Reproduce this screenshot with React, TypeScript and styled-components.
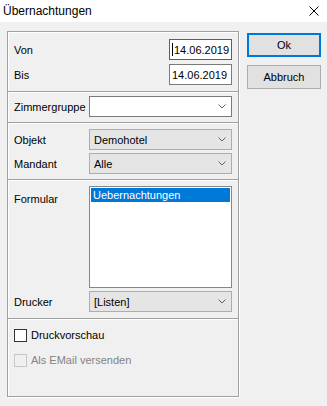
import React from 'react';
import styled, { createGlobalStyle } from 'styled-components';

const GlobalStyle = createGlobalStyle`
  html, body {
    margin: 0;
    padding: 0;
    background: #f0f0f0;
  }
  body {
    font-family: "Liberation Sans", Arial, sans-serif;
    font-size: 11px;
    color: #000;
  }
`;

const Window = styled.div`
  width: 327px;
  height: 406px;
  display: flex;
  flex-direction: column;
  background: #f0f0f0;
  overflow: hidden;
`;

const TitleBar = styled.div`
  height: 22px;
  flex: none;
  background: #fff;
  display: flex;
  align-items: center;
  justify-content: space-between;
  padding: 0 8px 0 3px;
  font-size: 12px;
`;

const Body = styled.div`
  display: flex;
  align-items: flex-start;
  padding: 9px 6px 0 7px;
`;

const Panel = styled.div`
  width: 233px;
  height: 366px;
  box-sizing: border-box;
  border: 1px solid #a0a0a0;
  box-shadow: inset 1px 1px 0 #fff, 1px 1px 0 #fff;
  display: flex;
  flex-direction: column;
`;

const Section = styled.div<{ $pad: string; $grow?: boolean }>`
  display: flex;
  flex-direction: column;
  padding: ${p => p.$pad};
  flex: ${p => (p.$grow ? 1 : 'none')};
`;

const Divider = styled.div`
  height: 0;
  border-top: 1px solid #a0a0a0;
  border-bottom: 1px solid #fff;
`;

const Row = styled.div<{ $gap?: number; $top?: boolean }>`
  display: flex;
  align-items: ${p => (p.$top ? 'flex-start' : 'center')};
  margin-top: ${p => p.$gap ?? 0}px;
`;

const Label = styled.div<{ $offset?: number }>`
  width: 75px;
  flex: none;
  padding-top: ${p => p.$offset ?? 0}px;
`;

const DateBox = styled.div<{ $focused?: boolean }>`
  margin-left: auto;
  width: 63px;
  height: 21px;
  box-sizing: border-box;
  border: 1px solid ${p => (p.$focused ? '#0078d7' : '#7a7a7a')};
  background: #fff;
  display: flex;
  align-items: center;
  padding-left: 2px;
`;

const Caret = styled.span`
  width: 1px;
  height: 13px;
  background: #000;
  margin-right: 1px;
`;

const Combo = styled.div<{ $editable?: boolean }>`
  flex: 1;
  height: 21px;
  box-sizing: border-box;
  border: 1px solid ${p => (p.$editable ? '#7a7a7a' : '#adadad')};
  background: ${p => (p.$editable ? '#fff' : '#e5e5e5')};
  display: flex;
  align-items: center;
  justify-content: space-between;
  padding: 0 5px 0 4px;
`;

const ListBox = styled.div`
  flex: 1;
  height: 102px;
  box-sizing: border-box;
  border: 1px solid #828790;
  background: #fff;
  padding: 1px;
`;

const ListItem = styled.div<{ $selected?: boolean }>`
  height: 14px;
  line-height: 14px;
  padding-left: 2px;
  background: ${p => (p.$selected ? '#0078d7' : 'transparent')};
  color: ${p => (p.$selected ? '#fff' : '#000')};
`;

const CheckRow = styled.div<{ $disabled?: boolean; $gap?: number }>`
  display: flex;
  align-items: center;
  gap: 4px;
  height: 14px;
  margin-top: ${p => p.$gap ?? 0}px;
  color: ${p => (p.$disabled ? '#838383' : '#000')};
`;

const Box = styled.span<{ $disabled?: boolean }>`
  width: 13px;
  height: 13px;
  box-sizing: border-box;
  border: 1px solid ${p => (p.$disabled ? '#c6c6c6' : '#333')};
  background: ${p => (p.$disabled ? '#f0f0f0' : '#fff')};
`;

const Buttons = styled.div`
  display: flex;
  flex-direction: column;
  gap: 8px;
  margin-left: 8px;
  padding-top: 2px;
`;

const Button = styled.button<{ $default?: boolean }>`
  width: 74px;
  height: 24px;
  box-sizing: border-box;
  border: ${p => (p.$default ? '2px solid #0078d7' : '1px solid #adadad')};
  background: #e1e1e1;
  font-family: inherit;
  font-size: 11px;
  color: #000;
  padding: 0;
`;

const Chevron = () => (
  <svg width="8" height="5" viewBox="0 0 8 5">
    <polyline points="0.5,0.5 4,4 7.5,0.5" fill="none" stroke="#606060" strokeWidth="1" />
  </svg>
);

const CloseIcon = () => (
  <svg width="10" height="10" viewBox="0 0 10 10">
    <path d="M0.5 0.5 L9.5 9.5 M9.5 0.5 L0.5 9.5" stroke="#000" strokeWidth="1" />
  </svg>
);

export default function App() {
  return (
    <>
      <GlobalStyle />
      <Window>
        <TitleBar>
          <span>Übernachtungen</span>
          <CloseIcon />
        </TitleBar>
        <Body>
          <Panel>
            <Section $pad="7px 6px 6px 6px">
              <Row>
                <Label>Von</Label>
                <DateBox $focused>
                  <Caret />
                  14.06.2019
                </DateBox>
              </Row>
              <Row $gap={4}>
                <Label>Bis</Label>
                <DateBox>14.06.2019</DateBox>
              </Row>
            </Section>
            <Divider />
            <Section $pad="3px 6px 5px 6px">
              <Row>
                <Label>Zimmergruppe</Label>
                <Combo $editable>
                  <span />
                  <Chevron />
                </Combo>
              </Row>
            </Section>
            <Divider />
            <Section $pad="5px 6px 5px 6px">
              <Row>
                <Label>Objekt</Label>
                <Combo>
                  <span>Demohotel</span>
                  <Chevron />
                </Combo>
              </Row>
              <Row $gap={3}>
                <Label>Mandant</Label>
                <Combo>
                  <span>Alle</span>
                  <Chevron />
                </Combo>
              </Row>
            </Section>
            <Divider />
            <Section $pad="5px 6px 6px 6px">
              <Row $top>
                <Label $offset={7}>Formular</Label>
                <ListBox>
                  <ListItem $selected>Uebernachtungen</ListItem>
                </ListBox>
              </Row>
              <Row $gap={3}>
                <Label>Drucker</Label>
                <Combo>
                  <span>[Listen]</span>
                  <Chevron />
                </Combo>
              </Row>
            </Section>
            <Divider />
            <Section $pad="8px 6px 0 6px" $grow>
              <CheckRow>
                <Box />
                Druckvorschau
              </CheckRow>
              <CheckRow $disabled $gap={11}>
                <Box $disabled />
                Als EMail versenden
              </CheckRow>
            </Section>
          </Panel>
          <Buttons>
            <Button $default>Ok</Button>
            <Button>Abbruch</Button>
          </Buttons>
        </Body>
      </Window>
    </>
  );
}
